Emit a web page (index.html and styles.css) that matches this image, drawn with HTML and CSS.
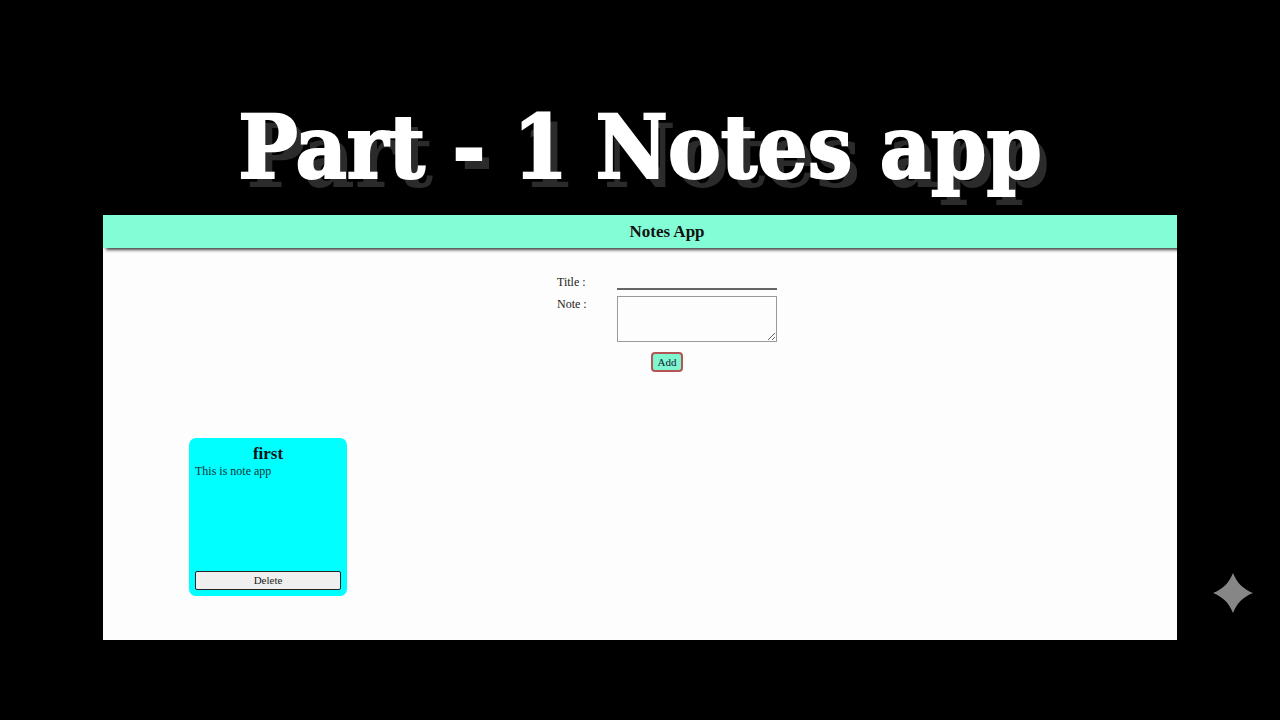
FILE: index.html
```html
<!DOCTYPE html>
<html lang="en">
<head>
    <meta charset="UTF-8">
    <meta name="viewport" content="width=device-width, initial-scale=1.0">
    <title>Notes App</title>
    <link rel="stylesheet" href="styles.css">
</head>
<body>
    <h1 class="cover-title">Part - 1 Notes app</h1>

    <main class="app">
        <header class="app-header">
            <h2>Notes App</h2>
        </header>

        <form id="note-form" class="note-form">
            <div class="form-row">
                <label for="title">Title :</label>
                <input type="text" id="title" name="title">
            </div>
            <div class="form-row">
                <label for="note">Note :</label>
                <textarea id="note" name="note"></textarea>
            </div>
            <button type="button" class="add-btn">Add</button>
        </form>

        <section class="notes">
            <article class="note-card">
                <h3>first</h3>
                <p>This is note app</p>
                <button type="button" class="delete-btn">Delete</button>
            </article>
        </section>
    </main>

    <svg class="sparkle" viewBox="0 0 40 40" aria-hidden="true">
        <path d="M20 0 C24 10 30 16 40 20 C30 24 24 30 20 40 C16 30 10 24 0 20 C10 16 16 10 20 0 Z" fill="#868686"/>
    </svg>
</body>
</html>
```
FILE: styles.css
```css
* {
    margin: 0;
    padding: 0;
    box-sizing: border-box;
    font-family: "Liberation Serif", "Times New Roman", serif;
}

body {
    background-color: #000;
    min-height: 100vh;
    padding: 90px 103px 80px;
}

.cover-title {
    height: 125px;
    font-family: "DejaVu Serif Condensed", "DejaVu Serif", serif;
    font-size: 88px;
    line-height: 114px;
    font-weight: bold;
    text-align: center;
    white-space: nowrap;
    color: #fff;
    -webkit-text-stroke: 2px #fff;
    text-shadow: 8px 9px 0 #2b2b2b;
}

.app {
    background-color: #fdfdfd;
    min-height: 425px;
    overflow: hidden;
}

.app-header {
    background-color: #83fdd5;
    padding: 7px 0 6px 54px;
    text-align: center;
    box-shadow: 3px 2px 3px #444;
}

.app-header h2 {
    font-size: 17px;
    line-height: 20px;
    color: #111;
}

/* Form */
.note-form {
    display: flex;
    flex-direction: column;
    align-items: center;
    gap: 6px;
    padding: 26px 0 0 54px;
}

.form-row {
    display: flex;
    width: 220px;
}

.form-row label {
    width: 60px;
    font-size: 12px;
    line-height: 16px;
    color: #222;
}

.form-row input,
.form-row textarea {
    flex: 1;
    min-width: 0;
    font-size: 12px;
    background-color: transparent;
    outline: none;
}

.form-row input {
    height: 16px;
    border: none;
    border-bottom: 2px solid #666;
}

.form-row textarea {
    height: 46px;
    padding: 2px;
    border: 1px solid #999;
}

.add-btn {
    margin-top: 4px;
    padding: 0 5px;
    font-size: 11px;
    line-height: 16px;
    color: #123;
    background-color: #7ff5d0;
    border: 2px solid #b35555;
    border-radius: 4px;
    cursor: pointer;
}

/* Notes list */
.notes {
    display: flex;
    flex-wrap: wrap;
    gap: 20px;
    padding: 66px 86px 44px;
}

.note-card {
    display: flex;
    flex-direction: column;
    width: 158px;
    min-height: 158px;
    padding: 6px;
    background-color: #00ffff;
    border-radius: 7px;
}

.note-card h3 {
    font-size: 17px;
    line-height: 20px;
    text-align: center;
    color: #111;
}

.note-card p {
    font-size: 12px;
    line-height: 14px;
    color: #133;
}

.delete-btn {
    margin-top: auto;
    font-size: 11px;
    line-height: 17px;
    color: #222;
    background-color: #efefef;
    border: 1px solid #222;
    border-radius: 2px;
    cursor: pointer;
}

/* Corner decoration */
.sparkle {
    position: absolute;
    right: 27px;
    bottom: 107px;
    width: 40px;
    height: 40px;
}
```
